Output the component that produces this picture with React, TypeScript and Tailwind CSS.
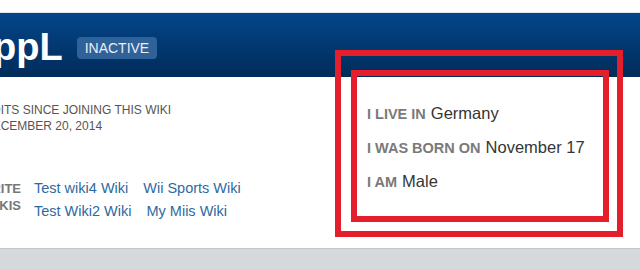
import React from "react";

const FAVORITOS = ["Test wiki4 Wiki", "Wii Sports Wiki", "Test Wiki2 Wiki", "My Miis Wiki"];

const DATOS = [
  { label: "I LIVE IN", value: "Germany" },
  { label: "I WAS BORN ON", value: "November 17" },
  { label: "I AM", value: "Male" },
];

export default function App() {
  return (
    <div className="relative w-[640px] h-[269px] overflow-hidden bg-[#d5d9dc] font-['Liberation_Sans',Arial,sans-serif]">
      <div className="h-[13px] bg-white border-b border-[#dde5ee]" />

      <div className="bg-white border-b border-[#c3c6c9]">
        {/* Cabecera */}
        <div className="h-[64px] flex items-start bg-gradient-to-b from-[#03468a] to-[#012c5a]">
          <h1 className="ml-[-7px] mt-[15px] text-[38px] leading-none font-bold text-white">ppL</h1>
          <span className="ml-[14px] mt-[24px] h-[22px] px-[8px] rounded-[4px] bg-[#2f6299] text-[14px] leading-[23px] text-[#e9eff6]">
            INACTIVE
          </span>
        </div>

        {/* Cuerpo */}
        <div className="h-[171px] flex">
          <div className="w-[367px] shrink-0 flex flex-col">
            <div className="ml-[-16px] mt-[25px] text-[12px] leading-[16px] text-[#555]">
              <p>EDITS SINCE JOINING THIS WIKI</p>
              <p>DECEMBER 20, 2014</p>
            </div>
            <div className="mt-[43px] flex items-start">
              <div className="ml-[-45px] mt-[3px] w-[66px] text-right text-[13px] leading-[17px] font-bold text-[#777]">
                FAVORITE
                <br />
                WIKIS
              </div>
              <div className="ml-[13px] w-[220px] flex flex-wrap gap-x-[15px] text-[14.5px] leading-[23px] text-[#2d6a9f]">
                {FAVORITOS.map((w) => (
                  <a key={w}>{w}</a>
                ))}
              </div>
            </div>
          </div>

          <div className="pt-[26px] flex flex-col">
            {DATOS.map((d) => (
              <div key={d.label} className="h-[34px] flex items-baseline gap-[5px] whitespace-nowrap">
                <span className="text-[14.5px] leading-[20px] font-bold text-[#7a7a7a]">{d.label}</span>
                <span className="text-[16.5px] leading-[20px] text-[#353535]">{d.value}</span>
              </div>
            ))}
          </div>
        </div>
      </div>

      {/* Recuadros rojos */}
      <div className="absolute left-[335px] top-[50px] w-[288px] h-[187px] border-[6px] border-[#e41f2b]" />
      <div className="absolute left-[351px] top-[70px] w-[258px] h-[152px] border-[6px] border-[#e41f2b]" />
    </div>
  );
}
